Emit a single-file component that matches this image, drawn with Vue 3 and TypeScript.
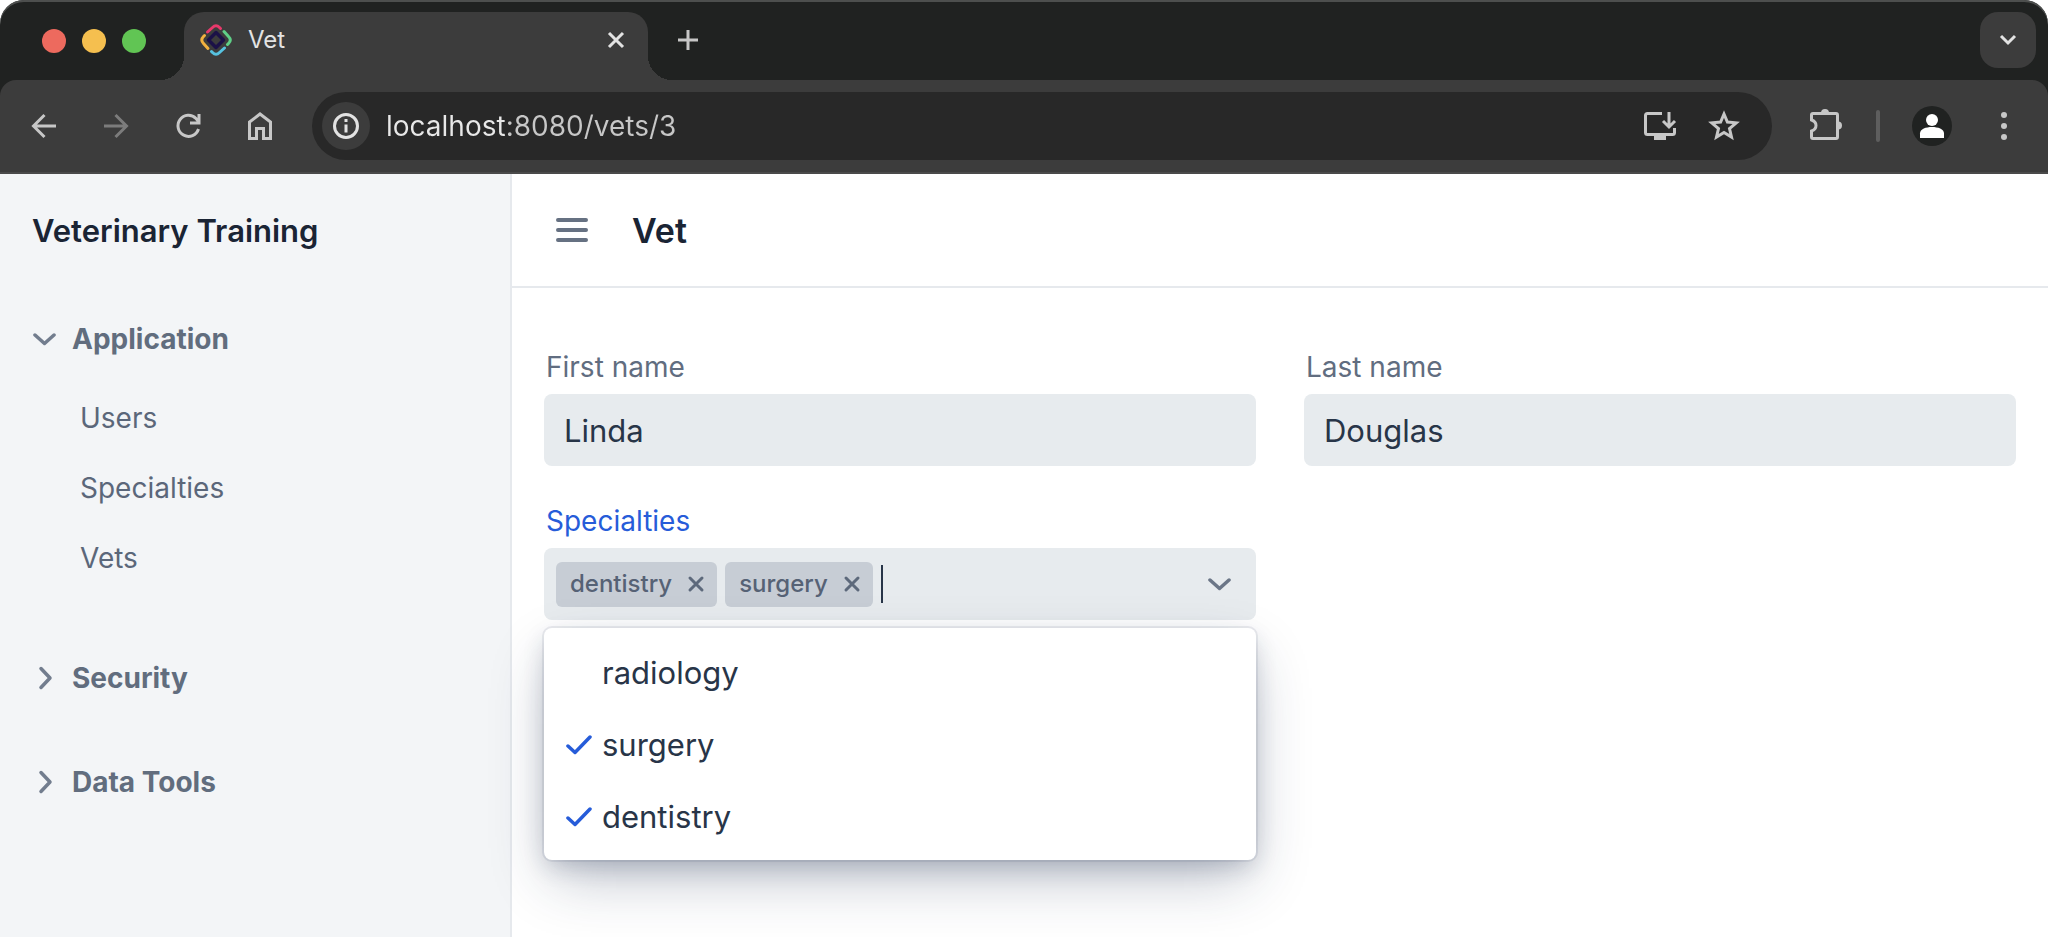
<script setup lang="ts">
import { ref } from 'vue'

interface NavGroup {
  title: string
  open: boolean
  items: string[]
}

const groups = ref<NavGroup[]>([
  { title: 'Application', open: true, items: ['Users', 'Specialties', 'Vets'] },
  { title: 'Security', open: false, items: [] },
  { title: 'Data Tools', open: false, items: [] },
])

const address = ref('localhost:8080/vets/3')
const firstName = ref('Linda')
const lastName = ref('Douglas')
const query = ref('')

const options = ['radiology', 'surgery', 'dentistry']
const selected = ref<string[]>(['dentistry', 'surgery'])

function toggle(name: string): void {
  selected.value = selected.value.includes(name)
    ? selected.value.filter((s) => s !== name)
    : [...selected.value, name]
}
</script>

<template>
  <div class="window">
    <header class="browser">
      <div class="tabs">
        <div class="lights">
          <span class="light red"></span>
          <span class="light yellow"></span>
          <span class="light green"></span>
        </div>
        <div class="tab">
          <svg class="favicon" viewBox="0 0 32 32" fill="none" stroke-width="3" stroke-linecap="round" stroke-linejoin="round">
            <path d="M7.500 8L12.500 3.500Q16 0 19.500 3.500L20.500 4.500" stroke="#e8396b" />
            <path d="M24 7.500L28.500 12.500Q32 16 28.500 19.500L27.500 20.500" stroke="#5fcf87" />
            <path d="M24.500 24L19.500 28.500Q16 32 12.500 28.500L11.500 27.500" stroke="#56c2e0" />
            <path d="M8 24.500L3.500 19.500Q0 16 3.500 12.500L4.500 11.500" stroke="#f2b13f" />
            <path d="M16 8.500L23.500 16L16 23.500L8.500 16Z" stroke="#1b1147" stroke-width="3.500" />
          </svg>
          <span class="tab-title">Vet</span>
          <button class="icon-btn" aria-label="Close tab">
            <svg width="20" height="20" viewBox="0 0 20 20" fill="none" stroke="#e3e3e3" stroke-width="3"><path d="M3 3L17 17M17 3L3 17" /></svg>
          </button>
        </div>
        <button class="icon-btn new-tab" aria-label="New tab">
          <svg width="24" height="24" viewBox="0 0 24 24" fill="none" stroke="#c7c7c7" stroke-width="3"><path d="M12 2V22M2 12H22" /></svg>
        </button>
        <button class="icon-btn tab-search" aria-label="Search tabs">
          <svg width="20" height="20" viewBox="0 0 20 20" fill="none" stroke="#e3e3e3" stroke-width="3"><path d="M3 6L10 13L17 6" /></svg>
        </button>
      </div>

      <div class="toolbar">
        <div class="nav-buttons">
          <button class="icon-btn" aria-label="Back">
            <svg width="32" height="32" viewBox="0 0 32 32" fill="none" stroke="#c7c7c7" stroke-width="3"><path d="M28 16H6M16.500 5L5.500 16L16.500 27" /></svg>
          </button>
          <button class="icon-btn" aria-label="Forward">
            <svg width="32" height="32" viewBox="0 0 32 32" fill="none" stroke="#7c7c7c" stroke-width="3"><path d="M4 16H26M15.500 5L26.500 16L15.500 27" /></svg>
          </button>
          <button class="icon-btn" aria-label="Reload">
            <svg width="32" height="32" viewBox="0 0 32 32" fill="none" stroke="#c7c7c7" stroke-width="3"><path d="M26.500 19A10.500 10.500 0 1 1 24 8.500L27 12M27 4V13H18" /></svg>
          </button>
          <button class="icon-btn" aria-label="Home">
            <svg width="32" height="32" viewBox="0 0 32 32" fill="none" stroke="#c7c7c7" stroke-width="3"><path d="M5.500 28.500V12L16 4L26.500 12V28.500H19.500V18.500H12.500V28.500Z" /></svg>
          </button>
        </div>
        <div class="omnibox">
          <button class="icon-btn site-info" aria-label="Site information">
            <svg width="32" height="32" viewBox="0 0 32 32" fill="none" stroke="#e3e3e3" stroke-width="3"><circle cx="16" cy="16" r="11.500" /><path d="M16 14.500V22.500M16 9V12" /></svg>
          </button>
          <input v-model="address" class="address" type="text" aria-label="Address" />
          <button class="icon-btn" aria-label="Install app">
            <svg width="36" height="32" viewBox="0 0 36 32" fill="none" stroke="#c7c7c7" stroke-width="3"><path d="M20 3.500H5.500Q3.500 3.500 3.500 5.500V22.500Q3.500 24.500 5.500 24.500H30.500Q32.500 24.500 32.500 22.500V18M27 2V16.500M21 11L27 17L33 11" /><path d="M12 24H24V30H12Z" fill="#c7c7c7" stroke="none" /></svg>
          </button>
          <button class="icon-btn" aria-label="Bookmark this page">
            <svg width="36" height="36" viewBox="0 0 36 36" fill="none" stroke="#c7c7c7" stroke-width="3"><path d="M18 6L21.400 14L30.200 14.800L23.500 20.500L25.500 29L18 24.400L10.500 29L12.500 20.500L5.800 14.800L14.600 14Z" /></svg>
          </button>
        </div>
        <button class="icon-btn" aria-label="Extensions">
          <svg width="36" height="36" viewBox="0 0 36 36" fill="none" stroke="#c7c7c7" stroke-width="3"><path d="M6 5.500H28Q29.500 5.500 29.500 7V29Q29.500 30.500 28 30.500H5Q3.500 30.500 3.500 29V23Q8 21.500 8 17.500Q8 13.500 3.500 12V7Q3.500 5.500 5 5.500Z" /><path d="M13 5A4 4 0 0 1 21 5ZM30 13.500A4 4 0 0 1 30 21.500Z" fill="#c7c7c7" stroke="none" /></svg>
        </button>
        <span class="divider"></span>
        <button class="icon-btn avatar" aria-label="Profile">
          <svg width="40" height="40" viewBox="0 0 40 40" fill="#ffffff"><circle cx="20" cy="14" r="6" /><path d="M8 32V27.500C8 23 14 21 20 21S32 23 32 27.500V32Z" /></svg>
        </button>
        <button class="icon-btn more" aria-label="Menu">
          <svg width="8" height="32" viewBox="0 0 8 32" fill="#c7c7c7"><circle cx="4" cy="5" r="3" /><circle cx="4" cy="16" r="3" /><circle cx="4" cy="27" r="3" /></svg>
        </button>
      </div>
    </header>

    <div class="app">
      <aside class="sidebar">
        <h2 class="brand">Veterinary Training</h2>
        <nav class="groups">
          <section v-for="group in groups" :key="group.title" class="group">
            <button class="group-title" :aria-expanded="group.open" @click="group.open = !group.open">
              <svg width="24" height="24" viewBox="0 0 24 24" fill="none" stroke="#727d8e" stroke-width="3.500" stroke-linecap="round" stroke-linejoin="round">
                <path v-if="group.open" d="M3 8L12.500 16.500L22 8" />
                <path v-else d="M9 2.500L18 12L9 21.500" />
              </svg>
              <span>{{ group.title }}</span>
            </button>
            <ul v-if="group.open && group.items.length" class="links">
              <li v-for="item in group.items" :key="item">
                <a :href="'#' + item.toLowerCase()">{{ item }}</a>
              </li>
            </ul>
          </section>
        </nav>
      </aside>

      <main class="content">
        <div class="view-header">
          <button class="icon-btn" aria-label="Toggle menu">
            <svg width="32" height="26" viewBox="0 0 32 26" fill="none" stroke="#667182" stroke-width="4" stroke-linecap="round"><path d="M2 3H30M2 13H30M2 23H30" /></svg>
          </button>
          <h1>Vet</h1>
        </div>

        <form class="form" @submit.prevent>
          <div class="field">
            <label for="first-name">First name</label>
            <input id="first-name" v-model="firstName" class="box" type="text" />
          </div>
          <div class="field">
            <label for="last-name">Last name</label>
            <input id="last-name" v-model="lastName" class="box" type="text" />
          </div>
          <div class="field">
            <label for="specialties" class="focused">Specialties</label>
            <div class="combo">
              <div class="box chips">
                <span v-for="name in selected" :key="name" class="chip">
                  <span>{{ name }}</span>
                  <button class="icon-btn" type="button" :aria-label="'Remove ' + name" @click="toggle(name)">
                    <svg width="20" height="20" viewBox="0 0 20 20" fill="none" stroke="#5d697b" stroke-width="3" stroke-linecap="round"><path d="M4 4L16 16M16 4L4 16" /></svg>
                  </button>
                </span>
                <span class="caret"></span>
                <input id="specialties" v-model="query" class="query" type="text" role="combobox" aria-expanded="true" aria-controls="specialty-list" />
                <button class="icon-btn" type="button" aria-label="Toggle options">
                  <svg width="24" height="24" viewBox="0 0 24 24" fill="none" stroke="#6b7687" stroke-width="3.500" stroke-linecap="round" stroke-linejoin="round"><path d="M2 8L11.500 16.500L21 8" /></svg>
                </button>
              </div>
              <ul id="specialty-list" class="overlay" role="listbox" aria-multiselectable="true">
                <li v-for="name in options" :key="name" class="option" role="option" :aria-selected="selected.includes(name)" @click="toggle(name)">
                  <svg width="28" height="24" viewBox="0 0 28 24" fill="none" stroke="#265cd9" stroke-width="3.500" stroke-linecap="round" stroke-linejoin="round">
                    <path v-if="selected.includes(name)" d="M4 13L11 19.500L26 4" />
                  </svg>
                  <span>{{ name }}</span>
                </li>
              </ul>
            </div>
          </div>
        </form>
      </main>
    </div>
  </div>
</template>

<style>
body {
  margin: 0;
  background: #ffffff;
}
</style>

<style scoped>
* {
  box-sizing: border-box;
}

.window {
  display: flex;
  flex-direction: column;
  min-height: 100vh;
  font-family: Inter, "Liberation Sans", sans-serif;
  font-size: 28px;
  line-height: 36px;
  color: #283548;
}

h1,
h2,
ul {
  margin: 0;
  padding: 0;
}

ul {
  list-style: none;
}

button,
input {
  margin: 0;
  padding: 0;
  border: 0;
  background: none;
  font: inherit;
  color: inherit;
  outline: none;
}

button {
  cursor: pointer;
}

svg {
  display: block;
  flex: none;
}

.icon-btn {
  display: flex;
  flex: none;
  align-items: center;
  justify-content: center;
}

/* Browser frame */
.browser {
  background: #202221;
  border-radius: 24px 24px 0 0;
  overflow: hidden;
  box-shadow: inset 0 2px 0 #4d4f4e;
}

.tabs {
  display: flex;
  align-items: center;
  height: 80px;
  padding: 12px 12px 0 42px;
}

.lights {
  display: flex;
  gap: 16px;
  width: 142px;
  padding-bottom: 10px;
}

.light {
  width: 24px;
  height: 24px;
  border-radius: 50%;
}

.red {
  background: #ed6a5e;
}

.yellow {
  background: #f5bf4f;
}

.green {
  background: #61c554;
}

.tab {
  position: relative;
  display: flex;
  align-items: center;
  align-self: stretch;
  width: 464px;
  padding: 0 22px 12px 16px;
  background: #3c3c3c;
  border-radius: 20px 20px 0 0;
}

.tab::before,
.tab::after {
  content: "";
  position: absolute;
  bottom: 0;
  width: 24px;
  height: 24px;
}

.tab::before {
  right: 100%;
  background: radial-gradient(circle at 0 0, transparent 24px, #3c3c3c 24px);
}

.tab::after {
  left: 100%;
  background: radial-gradient(circle at 100% 0, transparent 24px, #3c3c3c 24px);
}

.favicon {
  width: 32px;
  height: 32px;
}

.tab-title {
  flex: 1;
  margin-left: 16px;
  font-size: 24px;
  color: #e3e3e3;
}

.new-tab {
  margin-left: 28px;
  padding-bottom: 12px;
}

.tab-search {
  width: 56px;
  height: 56px;
  margin: 0 0 12px auto;
  background: #3c3c3c;
  border-radius: 18px;
}

.toolbar {
  display: flex;
  align-items: center;
  height: 94px;
  padding: 0 40px 0 28px;
  background: #3c3c3c;
  border-bottom: 2px solid #4a4a4a;
  border-radius: 16px 16px 0 0;
}

.nav-buttons {
  display: flex;
  gap: 40px;
  margin-right: 36px;
}

.omnibox {
  display: flex;
  flex: 1;
  align-items: center;
  gap: 28px;
  height: 68px;
  margin-right: 36px;
  padding: 0 30px 0 10px;
  background: #282828;
  border-radius: 34px;
}

.site-info {
  width: 48px;
  height: 48px;
  margin-right: -12px;
  background: #3c3c3c;
  border-radius: 50%;
}

.address {
  flex: 1;
  min-width: 0;
  height: 44px;
  color: transparent;
  background: linear-gradient(to right, #e8e8e8 121px, #c7c7c7 121px);
  -webkit-background-clip: text;
  background-clip: text;
}

.divider {
  width: 4px;
  height: 32px;
  margin: 0 32px;
  background: #5e5e5e;
  border-radius: 2px;
}

.avatar {
  width: 40px;
  height: 40px;
  background: #202221;
  border-radius: 50%;
}

.more {
  margin-left: 48px;
}

/* Application */
.app {
  display: flex;
  flex: 1;
}

.sidebar {
  flex: none;
  width: 25%;
  padding: 34px 32px;
  background: #f3f5f7;
  border-right: 2px solid #e6e9ed;
}

.brand {
  font-size: 31px;
  line-height: 46px;
  font-weight: 600;
  color: #1a2434;
}

.groups {
  display: flex;
  flex-direction: column;
  gap: 32px;
  margin-top: 49px;
}

.group-title {
  display: flex;
  align-items: center;
  gap: 16px;
  width: 100%;
  height: 72px;
  font-weight: 700;
  color: #616d7e;
}

.links {
  padding: 8px 0 17px 48px;
}

.links a {
  display: block;
  padding: 17px 0;
  color: #5b677a;
  text-decoration: none;
}

.content {
  flex: 1;
  min-width: 0;
  background: #ffffff;
}

.view-header {
  display: flex;
  align-items: center;
  gap: 44px;
  height: 114px;
  padding: 0 44px;
  border-bottom: 2px solid #e6e9ed;
}

.view-header h1 {
  padding-top: 2px;
  font-size: 34px;
  font-weight: 600;
  color: #1a2434;
}

.form {
  display: grid;
  grid-template-columns: 1fr 1fr;
  gap: 37px 48px;
  padding: 61px 32px;
}

.field {
  min-width: 0;
}

.field label {
  display: block;
  margin: 0 2px 9px;
  color: #616d80;
}

.field .focused {
  color: #265cd9;
}

.box {
  display: flex;
  width: 100%;
  height: 72px;
  padding: 0 20px;
  background: #e7ebee;
  border-radius: 8px;
  font-size: 31px;
}

.combo {
  position: relative;
}

.chips {
  align-items: center;
  gap: 8px;
  padding: 0 24px 0 12px;
}

.chip {
  display: flex;
  align-items: center;
  gap: 14px;
  height: 45px;
  padding: 0 11px 0 14px;
  background: #c7cdd5;
  border-radius: 6px;
  font-size: 24px;
  font-weight: 500;
  color: #566275;
}

.caret {
  width: 2px;
  height: 38px;
  background: #283548;
}

.query {
  flex: 1;
  min-width: 0;
  height: 44px;
}

.overlay {
  position: absolute;
  z-index: 1;
  top: 80px;
  left: 0;
  width: 100%;
  padding: 8px;
  background: #ffffff;
  border-radius: 8px;
  box-shadow: 0 0 0 2px rgba(27, 43, 75, 0.08), 0 8px 24px -4px rgba(27, 43, 75, 0.24), 0 24px 56px -8px rgba(27, 43, 75, 0.3);
}

.option {
  display: flex;
  align-items: center;
  gap: 10px;
  height: 72px;
  padding: 1px 12px 0;
  font-size: 31px;
  cursor: pointer;
}
</style>
